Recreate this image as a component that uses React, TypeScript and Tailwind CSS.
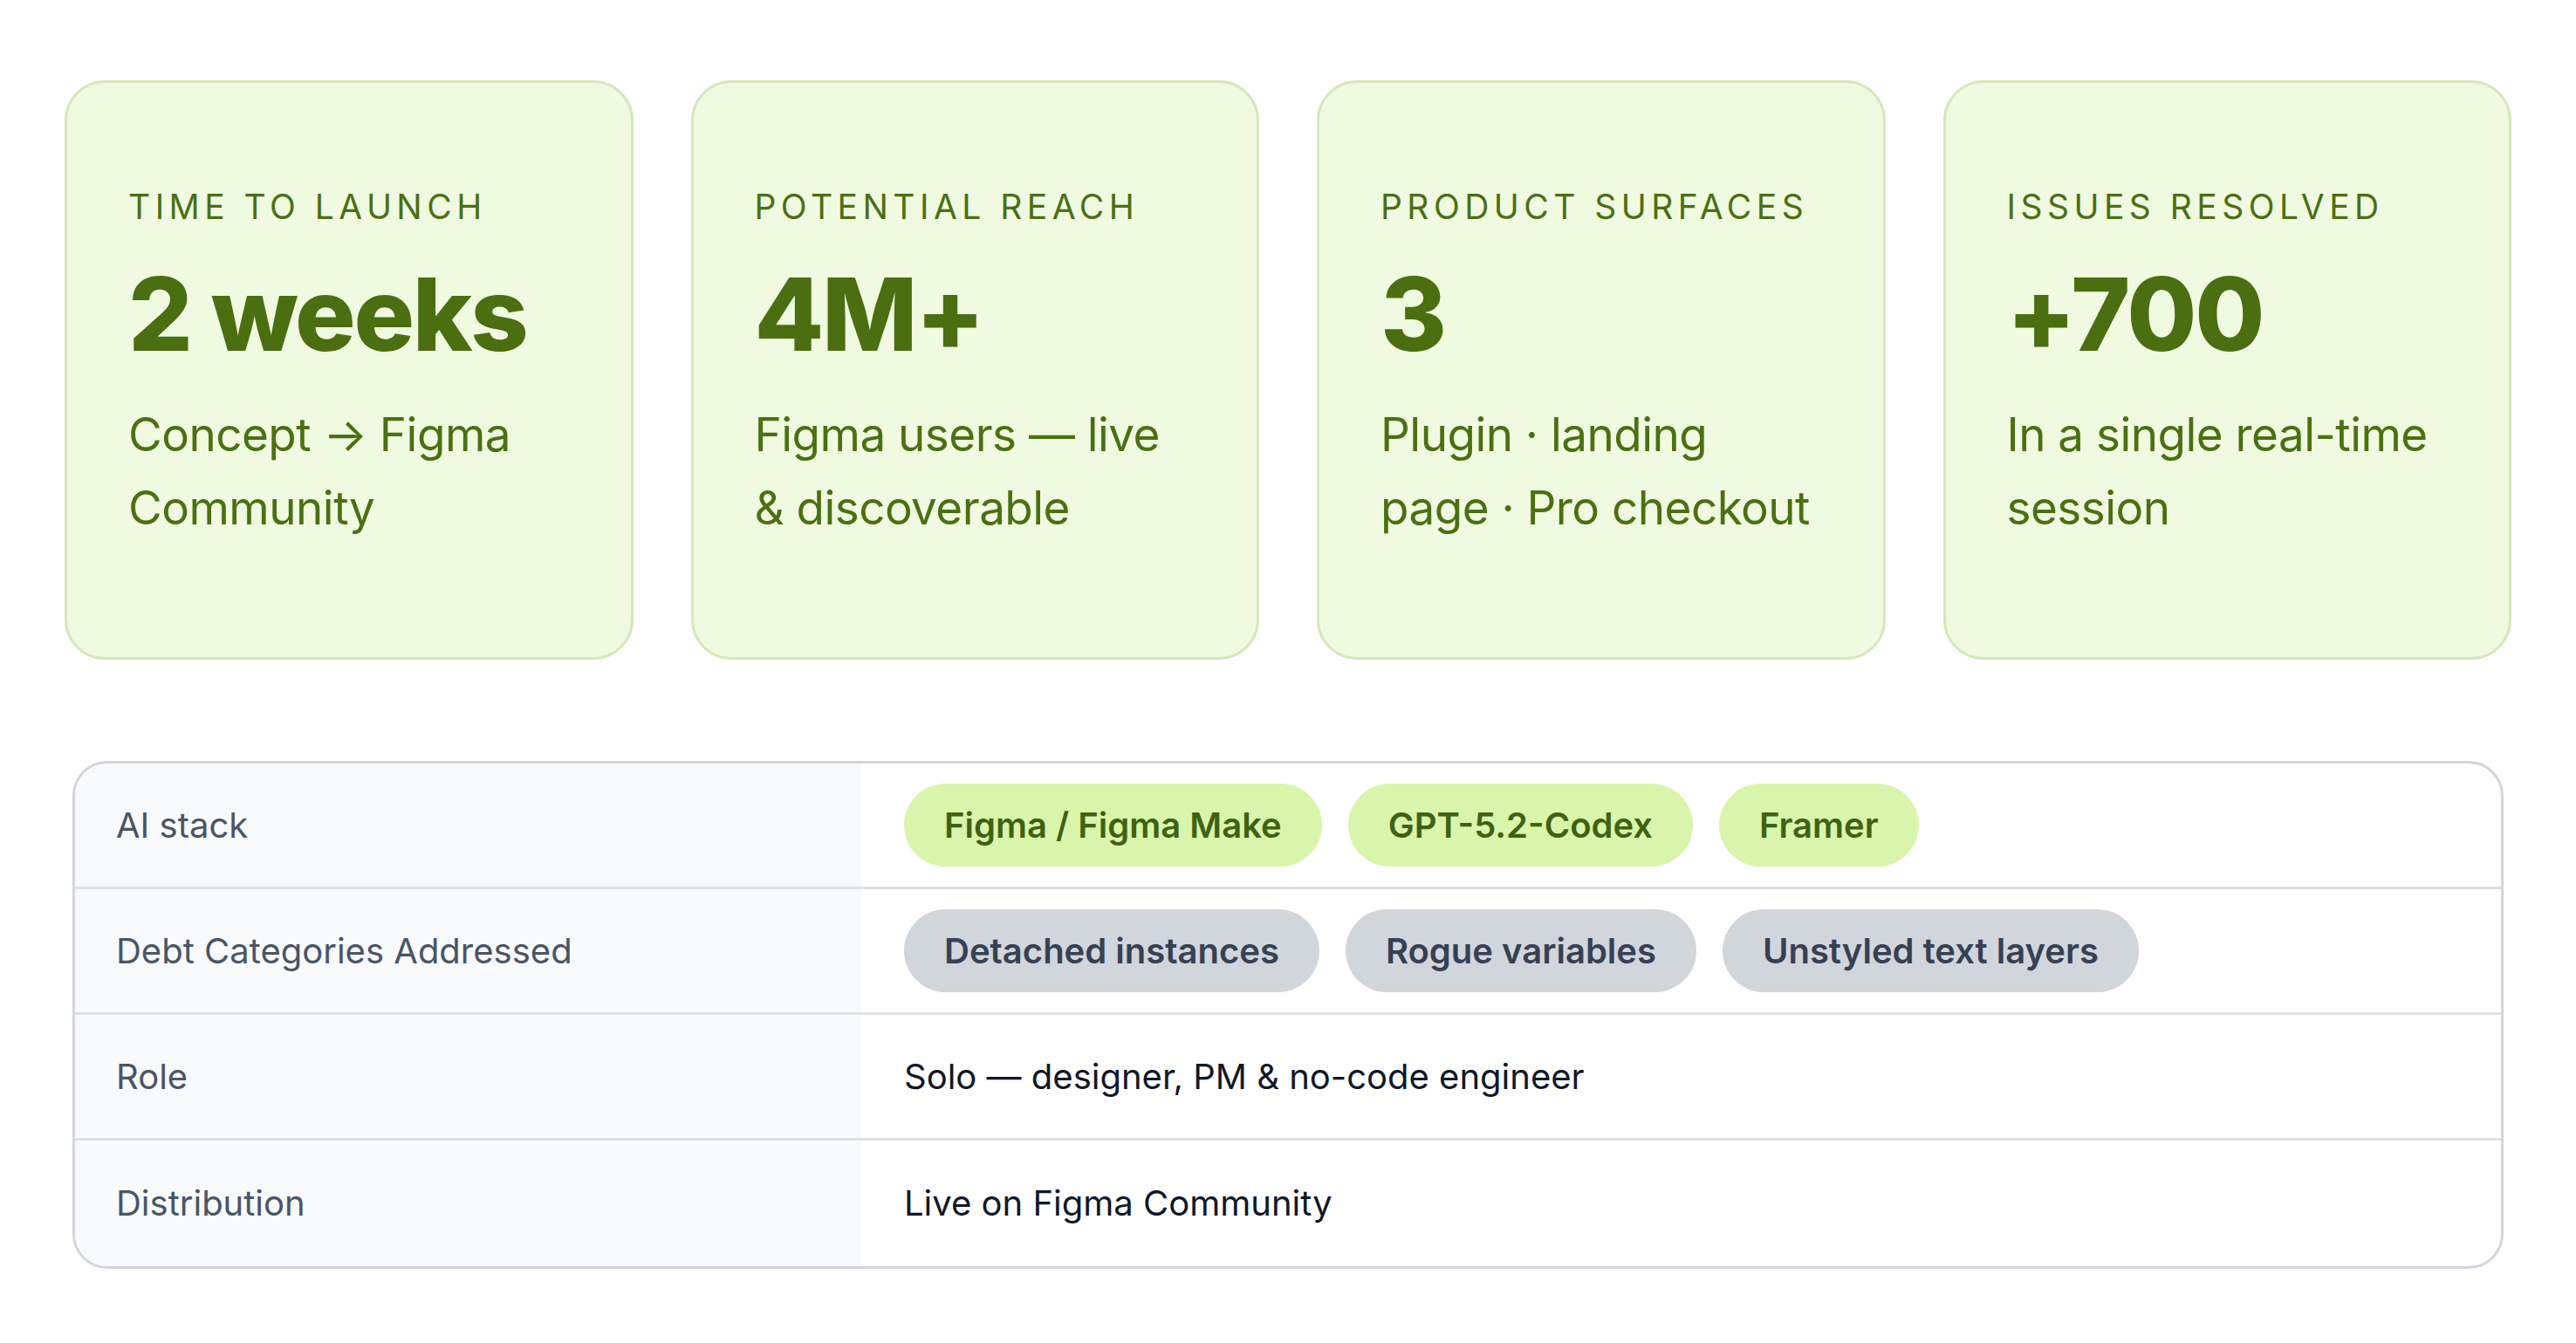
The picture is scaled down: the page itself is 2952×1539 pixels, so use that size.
const stats = [
  { label: 'Time to launch', value: '2 weeks', desc: 'Concept → Figma Community' },
  { label: 'Potential reach', value: '4M+', desc: 'Figma users — live & discoverable' },
  { label: 'Product surfaces', value: '3', desc: 'Plugin · landing page · Pro checkout' },
  { label: 'Issues resolved', value: '+700', desc: 'In a single real-time session' },
]

function Pill({ children, tone }: { children: string; tone: 'green' | 'gray' }) {
  return (
    <span
      className={`inline-flex h-[95px] items-center rounded-full px-[46px] text-[40px] font-semibold ${
        tone === 'green' ? 'bg-[#d9f5ab] text-[#3f6212]' : 'bg-[#d1d5dc] text-[#364153]'
      }`}
    >
      {children}
    </span>
  )
}

function Row({ label, children, last }: { label: string; children: React.ReactNode; last?: boolean }) {
  return (
    <div className={`flex h-[144px] ${last ? '' : 'border-b-[3px] border-[#dde1e7]'}`}>
      <div className="flex w-[901px] shrink-0 items-center bg-[#f8fafc] pl-[47px] text-[40px] text-[#4a5565]">
        {label}
      </div>
      <div className="flex flex-1 items-center gap-[30px] pl-[49px] text-[40px] text-[#101828]">{children}</div>
    </div>
  )
}

export default function App() {
  return (
    <div className="min-h-screen bg-white px-[74px] pt-[92px]" style={{ fontFamily: 'Inter, "Noto Sans", sans-serif' }}>
      <div className="grid grid-cols-4 gap-[66px]">
        {stats.map((s) => (
          <div
            key={s.label}
            className="h-[664px] rounded-[46px] border-[3px] border-[#d4e9bb] bg-[#f0fae1] px-[70px] pt-[122px] text-[#4a7011]"
          >
            <div className="text-[39px] uppercase leading-none tracking-[0.14em]">{s.label}</div>
            <div className="mt-[46px] text-[116px] font-extrabold leading-none tracking-[-0.02em] text-[#4a6e10]">
              {s.value}
            </div>
            <div className="mt-[38px] text-[53px] leading-[84px] tracking-[-0.01em]">{s.desc}</div>
          </div>
        ))}
      </div>
      <div className="mx-[9px] mt-[116px] overflow-hidden rounded-[40px] border-[3px] border-[#d1d5dc]">
        <Row label="AI stack">
          <Pill tone="green">Figma / Figma Make</Pill>
          <Pill tone="green">GPT-5.2-Codex</Pill>
          <Pill tone="green">Framer</Pill>
        </Row>
        <Row label="Debt Categories Addressed">
          <Pill tone="gray">Detached instances</Pill>
          <Pill tone="gray">Rogue variables</Pill>
          <Pill tone="gray">Unstyled text layers</Pill>
        </Row>
        <Row label="Role">Solo — designer, PM & no-code engineer</Row>
        <Row label="Distribution" last>
          Live on Figma Community
        </Row>
      </div>
    </div>
  )
}
